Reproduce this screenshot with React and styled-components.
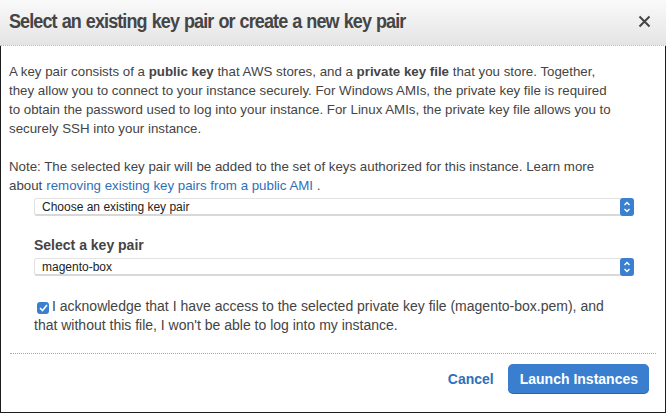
import React from "react";
import styled, { createGlobalStyle } from "styled-components";

const Global = createGlobalStyle`
  html, body { margin: 0; padding: 0; background: #fff; }
  body { font-family: "Liberation Sans", Arial, sans-serif; width: 666px; height: 413px; overflow: hidden; }
`;

const Dialog = styled.div`
  width: 666px;
  height: 413px;
  display: flex;
  flex-direction: column;
  box-sizing: border-box;
  color: #444;
`;

const Header = styled.div`
  height: 46px;
  box-sizing: border-box;
  background: linear-gradient(#fafafa, #e4e4e4);
  border-bottom: 1px dotted #b8b8b8;
  display: flex;
  align-items: center;
  justify-content: space-between;
  padding: 0 15px 2px 9px;
`;

const Title = styled.h1`
  margin: 0;
  font-size: 20px;
  font-weight: bold;
  color: #454545;
  letter-spacing: -1px;
  word-spacing: 1px;
  transform: scaleX(0.9);
  transform-origin: left center;
  white-space: nowrap;
`;

const Close = styled.button`
  border: none;
  background: none;
  padding: 0;
  width: 13px;
  height: 13px;
  display: flex;
  align-items: center;
  justify-content: center;
`;

const Body = styled.div`
  flex: 1;
  border: 1px solid #1c1c1c;
  border-top: none;
  display: flex;
  flex-direction: column;
  padding: 16px 9px 0 8px;
`;

const Para = styled.p`
  margin: 0 0 ${(p) => p.$mb}px 0;
  font-size: 13.3px;
  line-height: 19px;
  color: #444;
  white-space: nowrap;
`;

const Link = styled.a`
  color: #2f6fb7;
  text-decoration: none;
  margin-left: 4px;
`;

const Field = styled.div`
  padding-left: 25px;
  width: 600px;
  margin-bottom: ${(p) => p.$mb || 0}px;
`;

const Label = styled.div`
  font-size: 14px;
  line-height: 17px;
  font-weight: bold;
  color: #444;
  margin-bottom: 4px;
`;

const SelectBox = styled.div`
  height: 18px;
  box-sizing: border-box;
  border: 1px solid #e2e2e2;
  border-bottom: 2px solid #d8d8d8;
  border-radius: 3px;
  background: #fff;
  display: flex;
  align-items: center;
  justify-content: space-between;
  font-size: 12px;
  color: #222;
  padding-left: 7px;
`;

const Stepper = styled.span`
  width: 14px;
  height: 18px;
  margin-right: -1px;
  margin-top: 1px;
  border-radius: 3px;
  background: #3a7fd0;
  display: flex;
  align-items: center;
  justify-content: center;
`;

const Ack = styled.div`
  padding-left: 25px;
  font-size: 14px;
  line-height: 19px;
  color: #444;
  margin-top: 21px;
  white-space: nowrap;
`;

const Check = styled.span`
  display: inline-flex;
  width: 12px;
  height: 12px;
  border-radius: 3px;
  background: #3a7fd0;
  vertical-align: -1px;
  margin: 0 3px 0 3px;
  align-items: center;
  justify-content: center;
`;

const Divider = styled.div`
  border-top: 1px dotted #a8a8a8;
  margin: 18px 0 0 1px;
`;

const Footer = styled.div`
  display: flex;
  justify-content: flex-end;
  align-items: center;
  gap: 14px;
  padding: 10px 7px 0 0;
`;

const Cancel = styled.button`
  border: none;
  background: none;
  font-family: inherit;
  font-size: 14px;
  font-weight: bold;
  color: #2f6fb7;
  padding: 0;
`;

const Primary = styled.button`
  border: none;
  background: #3a7fcf;
  border-radius: 5px;
  color: #fff;
  font-family: inherit;
  font-size: 14px;
  font-weight: bold;
  height: 29px;
  padding: 0 11px 0 12px;
  box-shadow: 0 1px 0 #2b64a8;
`;

const StepIcon = () => (
  <svg width="8" height="14" viewBox="0 0 8 14">
    <path d="M1.5 5 L4 2.5 L6.5 5" stroke="#fff" strokeWidth="1.4" fill="none" />
    <path d="M1.5 9 L4 11.5 L6.5 9" stroke="#fff" strokeWidth="1.4" fill="none" />
  </svg>
);

export default function App() {
  return (
    <>
      <Global />
      <Dialog>
        <Header>
          <Title>Select an existing key pair or create a new key pair</Title>
          <Close aria-label="close">
            <svg width="13" height="13" viewBox="0 0 13 13">
              <path d="M1.5 1.5 L11.5 11.5 M11.5 1.5 L1.5 11.5" stroke="#444" strokeWidth="2" />
            </svg>
          </Close>
        </Header>
        <Body>
          <Para $mb={19}>
            A key pair consists of a <b>public key</b> that AWS stores, and a <b>private key file</b> that you store. Together,
            <br />
            they allow you to connect to your instance securely. For Windows AMIs, the private key file is required
            <br />
            to obtain the password used to log into your instance. For Linux AMIs, the private key file allows you to
            <br />
            securely SSH into your instance.
          </Para>
          <Para $mb={3}>
            Note: The selected key pair will be added to the set of keys authorized for this instance. Learn more
            <br />
            about<Link href="#">removing existing key pairs from a public AMI</Link> .
          </Para>
          <Field $mb={21}>
            <SelectBox>
              Choose an existing key pair
              <Stepper><StepIcon /></Stepper>
            </SelectBox>
          </Field>
          <Field>
            <Label>Select a key pair</Label>
            <SelectBox>
              magento-box
              <Stepper><StepIcon /></Stepper>
            </SelectBox>
          </Field>
          <Ack>
            <Check>
              <svg width="9" height="8" viewBox="0 0 9 8">
                <path d="M1 4 L3.5 6.5 L8 1" stroke="#fff" strokeWidth="1.6" fill="none" />
              </svg>
            </Check>
            I acknowledge that I have access to the selected private key file (magento-box.pem), and
            <br />
            that without this file, I won't be able to log into my instance.
          </Ack>
          <Divider />
          <Footer>
            <Cancel>Cancel</Cancel>
            <Primary>Launch Instances</Primary>
          </Footer>
        </Body>
      </Dialog>
    </>
  );
}
